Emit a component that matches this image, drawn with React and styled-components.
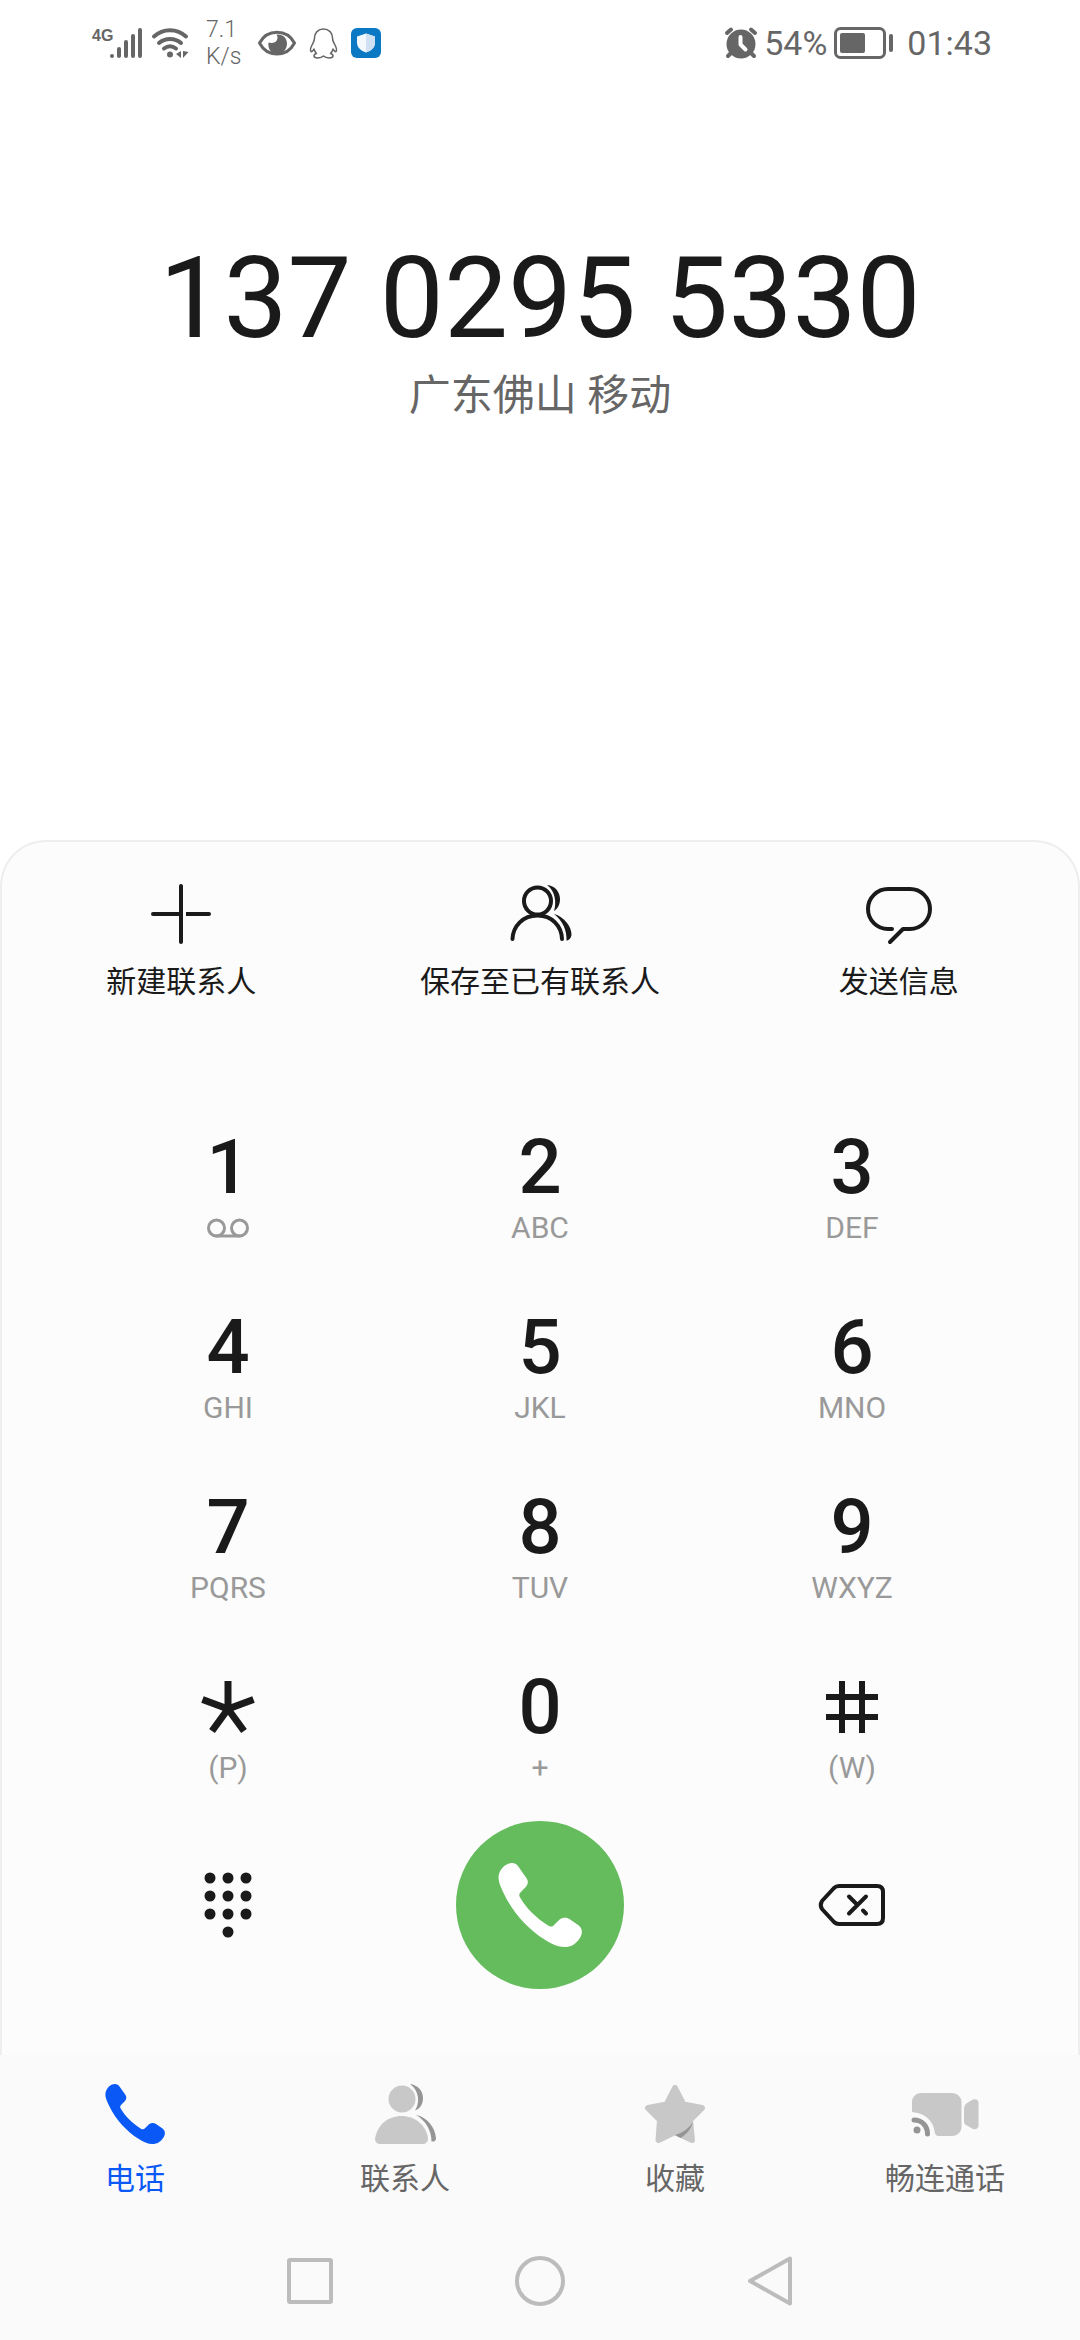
import React, { useState } from 'react';
import styled, { createGlobalStyle } from 'styled-components';

const COLORS = {
  ink: '#1a1a1a',
  grey: '#666',
  light: '#999',
  blue: '#0a59f7',
  green: '#64bc5c',
};

const GlobalStyle = createGlobalStyle`
  * {
    box-sizing: border-box;
  }
  body {
    margin: 0;
    background: #fff;
    color: ${COLORS.ink};
    font-family: Roboto, 'Noto Sans CJK SC', sans-serif;
  }
  button {
    border: 0;
    padding: 0;
    background: none;
    color: inherit;
    font: inherit;
    cursor: pointer;
  }
  svg {
    display: block;
    flex: none;
    overflow: visible;
  }
`;

const Screen = styled.div`
  display: flex;
  flex-direction: column;
  min-height: 100vh;
`;

/* status bar */

const StatusBar = styled.header`
  display: flex;
  align-items: center;
  justify-content: space-between;
  height: 86px;
  padding: 0 88px 0 92px;
  color: ${COLORS.grey};
  font-size: 34px;
`;

const StatusGroup = styled.div`
  display: flex;
  align-items: center;
  gap: ${p => p.$gap}px;
`;

const Signal = styled.div`
  display: flex;
  align-items: flex-start;
`;

// the label hangs over the short bars
const NetType = styled.span`
  width: 18px;
  font: bold 16px/16px 'Liberation Sans Narrow', 'Liberation Sans', sans-serif;
`;

const Speed = styled.span`
  width: 34px;
  margin: 0 4px;
  font-size: 23px;
  font-weight: 300;
  line-height: 27px;
`;

const Clock = styled.time`
  margin-left: 6px;
`;

/* number */

const Display = styled.main`
  flex: 1;
  padding-top: 152px;
  text-align: center;
`;

const PhoneNumber = styled.h1`
  margin: 0;
  font-size: 114px;
  font-weight: 400;
  line-height: 120px;
`;

const Location = styled.p`
  margin: 8px 0 0;
  color: ${COLORS.grey};
  font-size: 42px;
  line-height: 60px;
`;

/* dial panel */

const Panel = styled.section`
  padding: 36px 0 66px;
  background: #fcfcfc;
  border: 2px solid #eee;
  border-bottom: 0;
  border-radius: 46px 46px 0 0;
`;

const Actions = styled.div`
  display: grid;
  grid-template-columns: repeat(3, 1fr);
`;

const Action = styled.button`
  display: flex;
  flex-direction: column;
  align-items: center;
  gap: 12px;
  font-size: 30px;
  line-height: 40px;
`;

const Keys = styled.div`
  display: grid;
  grid-template-columns: repeat(3, 1fr);
  row-gap: 58px;
  padding: 121px 70px 0;
`;

const Key = styled.button`
  display: flex;
  flex-direction: column;
  align-items: center;
`;

const Digit = styled.span`
  display: flex;
  align-items: center;
  height: 88px;
  font-size: 76px;
  font-weight: 500;
  line-height: 88px;
`;

const Letters = styled.span`
  display: flex;
  align-items: center;
  height: 34px;
  color: ${COLORS.light};
  font-size: 30px;
  line-height: 34px;
`;

const CallRow = styled.div`
  display: grid;
  grid-template-columns: repeat(3, 1fr);
  place-items: center;
  padding: 36px 70px 0;
`;

const CallButton = styled.button`
  display: flex;
  align-items: center;
  justify-content: center;
  width: 168px;
  height: 168px;
  border-radius: 50%;
  background: ${COLORS.green};
  color: #fff;
`;

/* bottom bars */

const Tabs = styled.nav`
  display: grid;
  grid-template-columns: repeat(4, 1fr);
  padding-top: 29px;
  background: #fafafa;
`;

const Tab = styled.button`
  display: flex;
  flex-direction: column;
  align-items: center;
  gap: 15px;
  color: ${p => (p.$active ? COLORS.blue : COLORS.grey)};
  font-size: 30px;
  line-height: 40px;
`;

const SystemNav = styled.footer`
  display: flex;
  justify-content: center;
  gap: 180px;
  padding: 57px 0 34px;
  background: #fafafa;
`;

/* icons */

const Line = ({ w = 60, h = w, sw = 4, children }) => (
  <svg width={w} height={h} viewBox={`0 0 ${w} ${h}`} fill="none" stroke="currentColor"
    strokeWidth={sw} strokeLinecap="round" strokeLinejoin="round" aria-hidden="true">
    {children}
  </svg>
);

const SignalIcon = () => (
  <Line w={32} h={30}>
    <path d="M2 28v0M9 21v7M16 14v14M23 8v20M30 2v26" />
  </Line>
);

const WifiIcon = () => (
  <Line w={36} h={30}>
    <path d="M2 8.500C11 0 25 0 34 8.500M7 15c6-5.500 16-5.500 22 0M12 20.500c4-3 8-3 12 0" />
    <circle cx="18" cy="26.500" r="3" fill="currentColor" stroke="none" />
    <path d="M29 23v7l-5-4zM31 23v7l5.500-6z" fill="currentColor" stroke="none" />
  </Line>
);

const EyeIcon = () => (
  <Line w={38} h={26} sw={3}>
    <path d="M1.500 13C9 -1.500 29 -1.500 36.500 13C29 27.500 9 27.500 1.500 13z" />
    <path d="M18.500 4.500c3 5-1 10-8 8c-1 7 3.500 11.500 9 11.500s9.500-5 9.500-10.500S25 4 18.500 4.500z" fill="currentColor" stroke="none" />
  </Line>
);

const PenguinIcon = () => (
  <Line w={27} h={31} sw={1.5}>
    <path d="M13.500 1C8 1 4.500 5 4.500 10c0 3-1 4-2.500 7-2 4-1.500 6-1 6.500s2-.5 3-2.500c.5 2 1 3 2.500 4.500-2 .5-2.500 1.500-2.500 2.500 0 2.500 7 2.500 9.500 0 2.500 2.500 9.500 2.500 9.500 0 0-1-.5-2-2.500-2.500 1.500-1.500 2-2.500 2.500-4.500 1 2 2.500 3 3 2.500s1-2.500-1-6.500c-1.500-3-2.500-4-2.500-7C22.500 5 19 1 13.500 1z" />
  </Line>
);

const GuardIcon = () => (
  <svg width="30" height="30" viewBox="0 0 30 30" aria-hidden="true">
    <rect width="30" height="30" rx="6" fill="#0a78c2" />
    <path d="M15 5.500l9 3v6c0 5-4 8.500-9 10c-5-1.500-9-5-9-10v-6z" fill="#f3f8fd" />
    <path d="M15 5.500l9 3v6c0 5-4 8.500-9 10z" fill="#cfe0f2" />
  </svg>
);

const AlarmIcon = () => (
  <Line w={32} h={31}>
    <circle cx="16" cy="16" r="14.500" fill="currentColor" stroke="none" />
    <path d="M2 5l4-3.500M30 5l-4-3.500" />
    <path d="M6 25l-3 3M26 25l3 3" />
    <path d="M15.500 9v7.500l5 5" stroke="#fff" />
  </Line>
);

const BatteryIcon = () => (
  <Line w={60} h={32} sw={2}>
    <rect x="1.500" y="1.500" width="49" height="29" rx="5" strokeWidth="3" />
    <rect x="6" y="6" width="25" height="20" rx="2" fill="currentColor" stroke="none" />
    <path d="M57 9v14" strokeWidth="4" />
  </Line>
);

const PlusIcon = () => (
  <Line w={72}>
    <path d="M36 8v56M8 36h26M64 36H46" />
    <path d="M46 36h-5" strokeLinecap="butt" />
  </Line>
);

const PeopleIcon = () => (
  <Line w={60} h={72}>
    <circle cx="27.500" cy="23" r="13.500" />
    <path d="M2.500 61C3 48 13 37.500 27.500 37.500S51.500 48 52 61" />
    <g fill="currentColor" stroke="none">
      <path d="M37 7C45 7.500 50 14 50 21c0 5-2 9.500-6 12C46.500 25 45.500 13 37 7z" />
      <path d="M44 36C54 38.500 62 49 61.500 57C61 60 59 62.500 56.500 62.500C57 53 53 43 44 36z" />
    </g>
  </Line>
);

const MessageIcon = () => (
  <Line w={72}>
    <path d="M29 51h-4a20 20 0 0 1 0-40h22a20 20 0 0 1 0 40h-7L27 64" />
  </Line>
);

const VoicemailIcon = () => (
  <Line w={42} h={20} sw={3}>
    <circle cx="9.500" cy="10" r="8" />
    <circle cx="32.500" cy="10" r="8" />
    <path d="M9.500 18h23" />
  </Line>
);

const StarKeyIcon = () => (
  <Line w={54} h={52} sw={7}>
    <g strokeLinecap="butt">
      <path d="M27 0v28M27 28L1.500 18.500M27 28l25.500-9.500M27 28L11 50M27 28l16 22" />
    </g>
  </Line>
);

const HashKeyIcon = () => (
  <Line w={52} h={52} sw={6}>
    <g strokeLinecap="butt">
      <path d="M16 0v52M36 0v52M0 16h52M0 36h52" />
    </g>
  </Line>
);

const KeypadIcon = () => (
  <svg width="48" height="66" viewBox="0 0 48 66" fill="currentColor" aria-hidden="true">
    {[6, 24, 42].map(y => [6, 24, 42].map(x => <circle key={`${x}-${y}`} cx={x} cy={y} r="5.5" />))}
    <circle cx="24" cy="60" r="5.5" />
  </svg>
);

const HandsetIcon = ({ size = 60 }) => (
  <svg width={size} height={size} viewBox="0 0 60 60" fill="currentColor" aria-hidden="true">
    <path d="M10 0C12 0 13.500 1 14.500 2.500L20.500 11C21.800 13 21.500 15 20 17L16 21C14.800 22.300 15 23.500 16 25C20 32 27 39 35.500 44.500C37.500 45.800 39 45.500 40 44.200L44 40.300C46 38.800 49 38.600 51 40L57.500 44.500C60.500 46.800 60.500 50.500 58.500 53.500C55.500 58 52 60 47.500 60C43 60 38 58 33 54.500C22 47.500 11 36 4.500 22.500C1.500 16 0 13 .5 9C1 5 5 0 10 0z" />
  </svg>
);

const BackspaceIcon = () => (
  <Line w={68} h={48}>
    <path d="M21 5H59q6 0 6 6V37q0 6-6 6H21q-3 0-5-2L4 28q-2.500-4 0-8L16 7q2-2 5-2z" />
    <path d="M31 32.500L48 15.500M31 15.500l8.500 8.500M45 29.500l3 3" />
  </Line>
);

const ContactsIcon = () => (
  <svg width="60" height="60" viewBox="0 0 60 60" fill="#c8c8c8" aria-hidden="true">
    <circle cx="27" cy="15" r="13.500" />
    <path d="M0 55C2 41 13 32 26.500 32S51 41 53 54c0 4-2 6-6 6H6c-4 0-6-2-6-5z" />
    <g fill="#959595">
      <path d="M35 0C43 1 48 7 48 14c0 6-3 11-8 12.500C45 19 44.500 7 35 0z" />
      <path d="M41 31C52 33 60 43 61 54c0 3-2 4-4.500 3.500C56.500 46 50 36 41 31z" />
    </g>
  </svg>
);

const FavouriteIcon = () => (
  <svg width="60" height="60" viewBox="0 0 60 60" aria-hidden="true">
    <path d="M30 4l8.500 16.500L57 24 45 36l2 20-17-8-16.500 8L15 36 3 24l18.500-3.500z" fill="#c8c8c8" stroke="#c8c8c8" strokeWidth="6" strokeLinejoin="round" />
    <path d="M48 38C44 44 38 49 30 51l5.500 3C42 50 46 45 48 38z" fill="#959595" />
  </svg>
);

const VideoIcon = () => (
  <svg width="66" height="60" viewBox="0 0 66 60" fill="#c8c8c8" aria-hidden="true">
    <path d="M0 28V18C0 13 4 9 9 9h31c5 0 9.500 4 9.500 9v25c0 5-4.500 9-9.500 9H27c-3 0-4-2-4.500-5C21 36 12 29 0 28z" />
    <path d="M52 24q0-3 3-5l6-3.500q5-1 5.500 3V42q-1 4-5.500 3l-7-4q-2-1-2-4z" />
    <circle cx="5" cy="46" r="3.500" fill="#959595" />
    <path d="M2 36c8 0 13.500 6 13.500 14" fill="none" stroke="#959595" strokeWidth="5" strokeLinecap="round" />
  </svg>
);

const KEYS = [
  { digit: '1', letters: <VoicemailIcon />, label: '1' },
  { digit: '2', letters: 'ABC' },
  { digit: '3', letters: 'DEF' },
  { digit: '4', letters: 'GHI' },
  { digit: '5', letters: 'JKL' },
  { digit: '6', letters: 'MNO' },
  { digit: '7', letters: 'PQRS' },
  { digit: '8', letters: 'TUV' },
  { digit: '9', letters: 'WXYZ' },
  { digit: <StarKeyIcon />, letters: '(P)', label: '*' },
  { digit: '0', letters: '+' },
  { digit: <HashKeyIcon />, letters: '(W)', label: '#' },
];

const TABS = [
  { name: '电话', icon: <HandsetIcon /> },
  { name: '联系人', icon: <ContactsIcon /> },
  { name: '收藏', icon: <FavouriteIcon /> },
  { name: '畅连通话', icon: <VideoIcon /> },
];

const App = () => {
  const [tab, setTab] = useState('电话');
  return (
    <Screen>
      <GlobalStyle />
      <StatusBar>
        <StatusGroup $gap={14}>
          <StatusGroup $gap={10}>
            <Signal>
              <NetType>4G</NetType>
              <SignalIcon />
            </Signal>
            <WifiIcon />
          </StatusGroup>
          <Speed>7.1 K/s</Speed>
          <EyeIcon />
          <PenguinIcon />
          <GuardIcon />
        </StatusGroup>
        <StatusGroup $gap={7}>
          <AlarmIcon />
          <span>54%</span>
          <BatteryIcon />
          <Clock>01:43</Clock>
        </StatusGroup>
      </StatusBar>

      <Display>
        <PhoneNumber>137 0295 5330</PhoneNumber>
        <Location>广东佛山 移动</Location>
      </Display>

      <Panel>
        <Actions>
          <Action><PlusIcon />新建联系人</Action>
          <Action><PeopleIcon />保存至已有联系人</Action>
          <Action><MessageIcon />发送信息</Action>
        </Actions>
        <Keys>
          {KEYS.map(({ digit, letters, label }) => (
            <Key key={label || digit} aria-label={label}>
              <Digit>{digit}</Digit>
              <Letters>{letters}</Letters>
            </Key>
          ))}
        </Keys>
        <CallRow>
          <button aria-label="拨号盘"><KeypadIcon /></button>
          <CallButton aria-label="拨打"><HandsetIcon size={84} /></CallButton>
          <button aria-label="删除"><BackspaceIcon /></button>
        </CallRow>
      </Panel>

      <Tabs>
        {TABS.map(({ name, icon }) => (
          <Tab key={name} $active={tab === name} onClick={() => setTab(name)}>
            {icon}
            {name}
          </Tab>
        ))}
      </Tabs>

      <SystemNav>
        <button aria-label="最近任务">
          <Line w={50}><rect x="4" y="4" width="42" height="42" rx="1" stroke="#bcbcbc" /></Line>
        </button>
        <button aria-label="主页">
          <Line w={50}><circle cx="25" cy="25" r="23" stroke="#bcbcbc" /></Line>
        </button>
        <button aria-label="返回">
          <Line w={50}><path d="M45 2.500v45L5 25z" stroke="#bcbcbc" /></Line>
        </button>
      </SystemNav>
    </Screen>
  );
};

export default App;
